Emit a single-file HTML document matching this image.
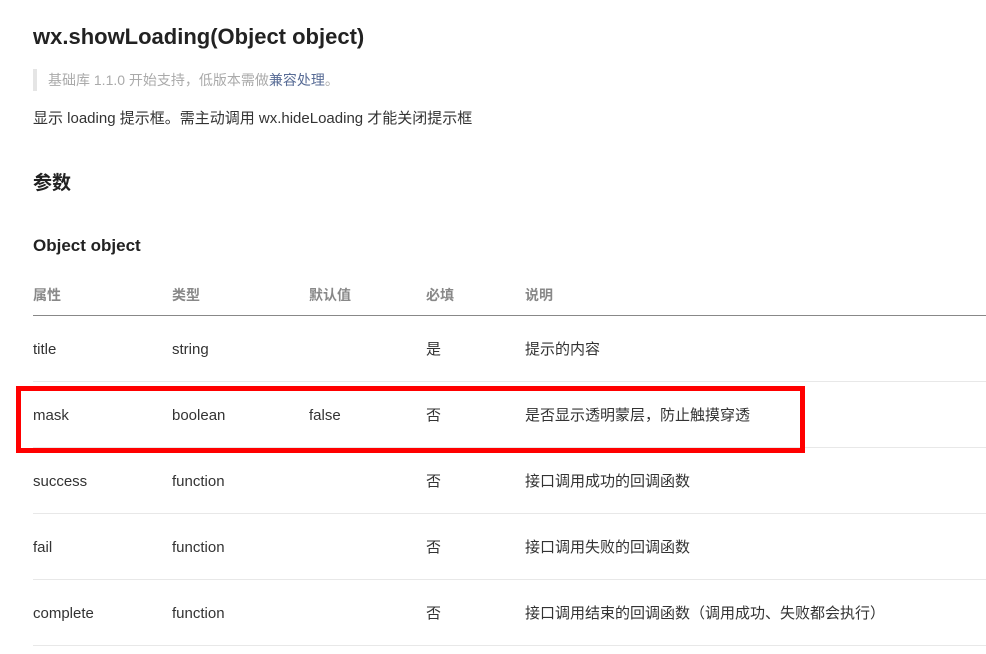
<!DOCTYPE html>
<html><head><meta charset="utf-8"><style>
body{margin:0;background:#fff;font-family:"Liberation Sans","Noto Sans CJK SC",sans-serif;color:#333;width:986px;height:654px;overflow:hidden;position:relative}
.a{position:absolute;white-space:nowrap}
h1{position:absolute;left:33px;top:22px;margin:0;font-size:22px;font-weight:bold;color:#222;line-height:30px}
.bq{position:absolute;left:33px;top:69px;height:22px;border-left:4px solid #e5e5e5;padding-left:11px;font-size:14px;line-height:22px;color:#aaa}
.p{left:33px;top:108px;font-size:15px;line-height:22px;color:#333}
.h2{left:33px;top:171px;font-size:19px;font-weight:bold;color:#222;line-height:26px}
.h3{left:33px;top:234px;font-size:17px;font-weight:bold;color:#222;line-height:24px}
.th{top:285px;font-size:14px;color:#888;font-weight:bold;line-height:20px}
.td{font-size:15px;color:#333;line-height:20px}
.line{position:absolute;left:33px;width:953px;height:1px;background:#e8e8e8}
</style></head><body>
<h1>wx.showLoading(Object object)</h1>
<div class="bq">基础库 1.1.0 开始支持，低版本需做<span style="color:#576b95">兼容处理</span>。</div>
<div class="a p">显示 loading 提示框。需主动调用 wx.hideLoading 才能关闭提示框</div>
<div class="a h2">参数</div>
<div class="a h3">Object object</div>
<div class="a th" style="left:33px">属性</div>
<div class="a th" style="left:172px">类型</div>
<div class="a th" style="left:309px">默认值</div>
<div class="a th" style="left:426px">必填</div>
<div class="a th" style="left:525px">说明</div>
<div class="line" style="top:315px;background:#888"></div>

<div class="a td" style="left:33px;top:340px">title</div>
<div class="a td" style="left:172px;top:340px">string</div>
<div class="a td" style="left:426px;top:340px">是</div>
<div class="a td" style="left:525px;top:340px">提示的内容</div>
<div class="line" style="top:381px"></div>

<div class="a td" style="left:33px;top:406px">mask</div>
<div class="a td" style="left:172px;top:406px">boolean</div>
<div class="a td" style="left:309px;top:406px">false</div>
<div class="a td" style="left:426px;top:406px">否</div>
<div class="a td" style="left:525px;top:406px">是否显示透明蒙层，防止触摸穿透</div>
<div class="line" style="top:447px"></div>

<div class="a td" style="left:33px;top:472px">success</div>
<div class="a td" style="left:172px;top:472px">function</div>
<div class="a td" style="left:426px;top:472px">否</div>
<div class="a td" style="left:525px;top:472px">接口调用成功的回调函数</div>
<div class="line" style="top:513px"></div>

<div class="a td" style="left:33px;top:538px">fail</div>
<div class="a td" style="left:172px;top:538px">function</div>
<div class="a td" style="left:426px;top:538px">否</div>
<div class="a td" style="left:525px;top:538px">接口调用失败的回调函数</div>
<div class="line" style="top:579px"></div>

<div class="a td" style="left:33px;top:604px">complete</div>
<div class="a td" style="left:172px;top:604px">function</div>
<div class="a td" style="left:426px;top:604px">否</div>
<div class="a td" style="left:525px;top:604px">接口调用结束的回调函数（调用成功、失败都会执行）</div>
<div class="line" style="top:645px"></div>

<div style="position:absolute;left:16px;top:386px;width:779px;height:57px;border:5px solid #f00"></div>
</body></html>
